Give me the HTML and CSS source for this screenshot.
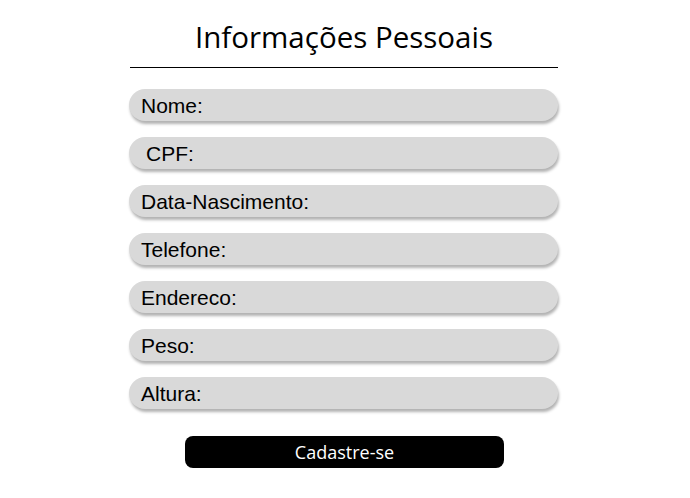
FILE: index.html
```html
<!DOCTYPE html>
<html lang="pt-BR">
<head>
<meta charset="utf-8">
<title>Informações Pessoais</title>
<link rel="stylesheet" href="styles.css">
</head>
<body>
<main class="card">
  <h1 class="title">Informações Pessoais</h1>
  <form class="form">
    <div class="field">Nome:</div>
    <div class="field field-indent">CPF:</div>
    <div class="field">Data-Nascimento:</div>
    <div class="field">Telefone:</div>
    <div class="field">Endereco:</div>
    <div class="field">Peso:</div>
    <div class="field">Altura:</div>
    <button type="button" class="submit">Cadastre-se</button>
  </form>
</main>
</body>
</html>
```
FILE: styles.css
```css
* { box-sizing: border-box; }
html, body { margin: 0; padding: 0; background: #fff; }
body { font-family: "Liberation Sans", Arial, sans-serif; color: #000; padding-right: 3px; }

.card {
  width: 429px;
  margin: 0 auto;
  padding-top: 17px;
}

.title {
  margin: 0 0 0 1px;
  font-family: "Open Sans", "Noto Sans", sans-serif;
  font-weight: 400;
  font-size: 29.5px;
  line-height: 40px;
  text-align: center;
  padding-bottom: 10px;
  border-bottom: 1px solid #000;
}

.form {
  display: flex;
  flex-direction: column;
  gap: 16px;
  padding-top: 21px;
}

.field {
  height: 32px;
  border-radius: 16px;
  background: #d9d9d9;
  box-shadow: 1px 3px 3px rgba(0, 0, 0, 0.3);
  font-size: 21px;
  line-height: 32px;
  padding: 1px 0 0 12px;
}

.field-indent { padding-left: 17px; }

.submit {
  align-self: center;
  width: 319px;
  height: 32px;
  margin: 11px 0 0 2px;
  border: 0;
  border-radius: 8px;
  background: #000;
  color: #fff;
  font-family: "Open Sans", "Noto Sans", sans-serif;
  font-size: 18px;
  line-height: 32px;
  padding: 0;
}
```
